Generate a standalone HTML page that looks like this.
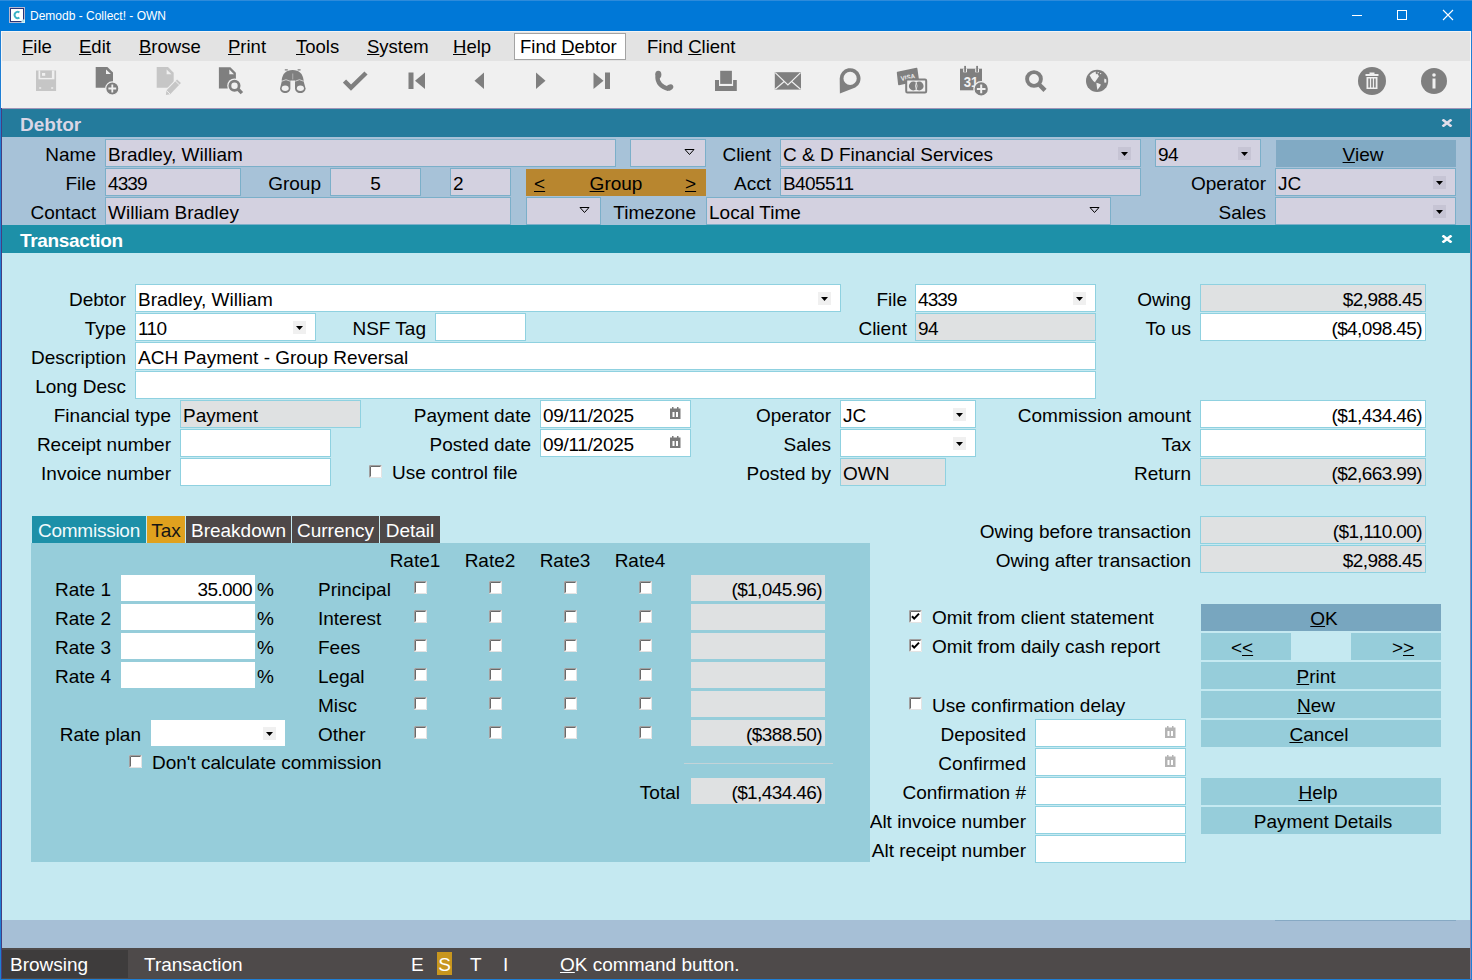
<!DOCTYPE html>
<html><head><meta charset="utf-8"><title>Demodb - Collect! - OWN</title>
<style>
html,body{margin:0;padding:0;width:1472px;height:980px;overflow:hidden;background:#1E7FD5;}
body{position:relative;font-family:"Liberation Sans", sans-serif;font-size:19px;color:#000;}
.a{position:absolute;display:block;}
.t{position:absolute;white-space:nowrap;line-height:20px;}
u{text-decoration:underline;text-underline-offset:1px;text-decoration-thickness:1px;}
</style></head><body>
<div class="a" style="left:0px;top:0px;width:1472px;height:980px;background:#1E7FD5;"></div>
<div class="a" style="left:1px;top:31px;width:1470px;height:948px;background:#463E80;"></div>
<div class="a" style="left:1470px;top:108px;width:1px;height:871px;background:#8E86B0;"></div>
<div class="a" style="left:1px;top:31px;width:1px;height:77px;background:#F6F6F6;"></div>
<div class="a" style="left:1470px;top:31px;width:1px;height:77px;background:#F6F6F6;"></div>
<div class="a" style="left:0px;top:0px;width:1472px;height:31px;background:#0078D7;"></div>
<div class="a" style="left:0px;top:0px;width:1472px;height:1px;background:#2D8BDB;"></div>
<svg class="a" style="left:9px;top:7px" width="16" height="16" viewBox="0 0 16 16"><rect x="0.5" y="0.5" width="15" height="15" fill="none" stroke="#B7B7CF" stroke-width="1"/><rect x="1.5" y="1.5" width="13" height="13" fill="#fff" stroke="#28367A" stroke-width="1"/><path d="M10.4 5.4 A3.1 3.1 0 1 0 10.4 10.6" fill="none" stroke="#3BB3C6" stroke-width="1.9"/><rect x="12.5" y="12.5" width="3.5" height="3.5" fill="#D8F0F4"/><rect x="13.5" y="13.5" width="1.2" height="1.2" fill="#6CC6D4"/></svg>
<div class="t" style="top:6px;font-size:12px;color:#fff;left:30px;">Demodb - Collect! - OWN</div>
<svg class="a" style="left:1340px;top:0" width="130" height="31" viewBox="0 0 130 31"><rect x="12" y="15" width="10" height="1" fill="#fff"/><rect x="57.5" y="10.5" width="9" height="9" fill="none" stroke="#fff" stroke-width="1"/><path d="M103 10 L113 20 M113 10 L103 20" stroke="#fff" stroke-width="1.1"/></svg>
<div class="a" style="left:2px;top:31px;width:1468px;height:30px;background:#E3E3E3;"></div>
<div class="a" style="left:2px;top:31px;width:1468px;height:1px;background:#F4F4F4;"></div>
<div class="t" style="top:37px;font-size:18.5px;left:22px;"><u>F</u>ile</div>
<div class="t" style="top:37px;font-size:18.5px;left:79px;"><u>E</u>dit</div>
<div class="t" style="top:37px;font-size:18.5px;left:139px;"><u>B</u>rowse</div>
<div class="t" style="top:37px;font-size:18.5px;left:228px;"><u>P</u>rint</div>
<div class="t" style="top:37px;font-size:18.5px;left:296px;"><u>T</u>ools</div>
<div class="t" style="top:37px;font-size:18.5px;left:367px;"><u>S</u>ystem</div>
<div class="t" style="top:37px;font-size:18.5px;left:453px;"><u>H</u>elp</div>
<div class="a" style="left:514px;top:33px;width:112px;height:27px;background:#FFFFFF;box-sizing:border-box;border:1px solid #A3A3A3;"></div>
<div class="t" style="top:37px;font-size:18.5px;left:520px;">Find <u>D</u>ebtor</div>
<div class="t" style="top:37px;font-size:18.5px;left:647px;">Find <u>C</u>lient</div>
<div class="a" style="left:2px;top:61px;width:1468px;height:47px;background:#F0F0F0;"></div>
<div class="a" style="left:2px;top:108px;width:1468px;height:1px;background:#9F95B8;"></div>
<svg class="a" style="left:36px;top:70px" width="21" height="22" viewBox="0 0 21 22"><path d="M0 0.5 H20.1 V21 H0 Z" fill="#C6C6C6"/><rect x="2.5" y="0.5" width="15.9" height="8.8" fill="#F0F0F0"/><rect x="4.2" y="0.5" width="11.7" height="7.4" fill="#C6C6C6"/><rect x="6" y="3" width="3.2" height="2.8" fill="#F0F0F0"/><rect x="3.2" y="17.3" width="2" height="1.4" fill="#F0F0F0"/><rect x="15.2" y="17.3" width="2" height="1.4" fill="#F0F0F0"/></svg>
<svg class="a" style="left:95px;top:67px" width="25" height="29" viewBox="0 0 25 29"><path d="M0.7 0.1 H12.4 L18 5.6 V20.8 H0.7 Z" fill="#7F7F7F"/><path d="M11 2.4 V7 H15.9 Z" fill="#F0F0F0"/><circle cx="17.3" cy="21.5" r="6.6" fill="#7F7F7F" stroke="#F0F0F0" stroke-width="1.2"/><path d="M17.3 17.6 V25.4 M13.4 21.5 H21.2" stroke="#F0F0F0" stroke-width="1.8"/></svg>
<svg class="a" style="left:156px;top:67px" width="28" height="29" viewBox="0 0 28 29"><path d="M0.7 0.1 H12 L17.7 5.8 V20.8 H0.7 Z" fill="#C6C6C6"/><path d="M10.6 2.4 V7.2 H15.5 Z" fill="#F0F0F0"/><path d="M9.2 28.6 L9.63 22.84 L20.33 11.69 L25.67 16.81 L14.97 27.96 Z" fill="#F0F0F0"/><path d="M9.9 27.9 L10.35 23.53 L21.05 12.38 L24.95 16.12 L14.25 27.27 Z" fill="#C6C6C6"/><path d="M10.1 23.3 L14.5 27.5 M19.1 13.7 L23.7 18.1" stroke="#F0F0F0" stroke-width="1"/></svg>
<svg class="a" style="left:218px;top:67px" width="26" height="28" viewBox="0 0 26 28"><path d="M0.9 0.3 H12.4 L17.9 5.8 V21.5 H0.9 Z" fill="#7F7F7F"/><path d="M11.3 2.6 V7.3 H16 Z" fill="#F0F0F0"/><circle cx="16.5" cy="18.7" r="7.3" fill="#F0F0F0"/><circle cx="16.5" cy="18.7" r="4.6" fill="none" stroke="#7F7F7F" stroke-width="2.8"/><path d="M19.6 21.8 L23.9 26.1" stroke="#7F7F7F" stroke-width="3.4"/></svg>
<svg class="a" style="left:279px;top:69px" width="28" height="24" viewBox="0 0 28 24"><path d="M2.6 11.5 C3.4 4.5 7 1 13.6 1 C20.2 1 23.8 4.5 24.6 11.5 Z" fill="#7F7F7F"/><path d="M3.2 10.8 H11.4 V19.5 A5.2 4.6 0 0 1 1 19.5 Z" fill="#7F7F7F"/><path d="M16 10.8 H24.2 L26.6 19.5 A5.2 4.6 0 0 1 16 19.5 Z" fill="#7F7F7F"/><ellipse cx="6.2" cy="19.3" rx="3.5" ry="2.7" fill="#F0F0F0"/><ellipse cx="21.4" cy="19.3" rx="3.5" ry="2.7" fill="#F0F0F0"/><path d="M2.8 12.2 Q7 9.2 11.2 12.2 M16.2 12.2 Q20.4 9.2 24.6 12.2" fill="none" stroke="#F0F0F0" stroke-width="0.7"/><rect x="13.1" y="4.5" width="1.2" height="6" fill="#A9A9A9"/><path d="M5.8 0.9 H8.8 M18.6 0.9 H21.6" stroke="#7F7F7F" stroke-width="1.1"/></svg>
<svg class="a" style="left:343px;top:71px" width="25" height="20" viewBox="0 0 25 20"><path d="M1.5 10 L8 16.5 L23 2" fill="none" stroke="#7F7F7F" stroke-width="4.5"/></svg>
<svg class="a" style="left:408px;top:72px" width="18" height="18" viewBox="0 0 18 18"><rect x="0.5" y="0.5" width="5" height="16.5" fill="#7F7F7F"/><path d="M17 0.5 V17 L7 8.75 Z" fill="#7F7F7F"/></svg>
<svg class="a" style="left:474px;top:72px" width="11" height="18" viewBox="0 0 11 18"><path d="M10 0.5 V17 L0.5 8.75 Z" fill="#7F7F7F"/></svg>
<svg class="a" style="left:536px;top:72px" width="11" height="18" viewBox="0 0 11 18"><path d="M0 0.5 V17 L9.5 8.75 Z" fill="#7F7F7F"/></svg>
<svg class="a" style="left:593px;top:72px" width="18" height="18" viewBox="0 0 18 18"><path d="M0.5 0.5 V17 L10.5 8.75 Z" fill="#7F7F7F"/><rect x="12" y="0.5" width="5" height="16.5" fill="#7F7F7F"/></svg>
<svg class="a" style="left:653px;top:70px" width="22" height="22" viewBox="0 0 22 22"><ellipse cx="5.3" cy="4.6" rx="3.1" ry="3.9" fill="#7F7F7F"/><ellipse cx="16.6" cy="17.5" rx="3.9" ry="2.9" transform="rotate(-30 16.6 17.5)" fill="#7F7F7F"/><path d="M4.4 6.5 Q4.2 15.5 15.5 19" fill="none" stroke="#7F7F7F" stroke-width="4.2"/></svg>
<svg class="a" style="left:714px;top:70px" width="24" height="22" viewBox="0 0 24 22"><rect x="6.2" y="0.8" width="11.7" height="13.1" fill="#7F7F7F"/><path d="M1 10 H5 V16 H19.1 V10 H22.8 V21 H1 Z" fill="#7F7F7F"/></svg>
<svg class="a" style="left:774px;top:72px" width="28" height="18" viewBox="0 0 28 18"><rect x="0.8" y="0.2" width="26.2" height="17.4" fill="#7F7F7F"/><path d="M1.2 0.6 L13.9 13 L26.6 0.6 M1.2 17.2 L9.9 9.7 M26.6 17.2 L17.9 9.7" fill="none" stroke="#F0F0F0" stroke-width="1.2"/></svg>
<svg class="a" style="left:838px;top:67px" width="24" height="28" viewBox="0 0 24 28"><path d="M1.7 11.6 A10.4 10.4 0 1 1 17.3 20.6 L1.9 26.4 Z" fill="#7F7F7F"/><circle cx="12.1" cy="11.4" r="6.6" fill="#F0F0F0"/></svg>
<svg class="a" style="left:896px;top:67px" width="33" height="28" viewBox="0 0 33 28"><path d="M1.6 5.6 L20.6 1.6 L22.2 13.2 L2.9 17.4 Z" fill="#7F7F7F" stroke="#7F7F7F" stroke-width="1.6" stroke-linejoin="round"/><text x="4.6" y="12.6" font-family="Liberation Sans" font-weight="bold" font-size="6.6" fill="#EDEDED" textLength="14.5" lengthAdjust="spacingAndGlyphs" transform="rotate(-11 12 10)">VISA</text><rect x="10.2" y="12.6" width="20" height="12.8" rx="1.2" fill="#F0F0F0" stroke="#7F7F7F" stroke-width="2"/><circle cx="17.3" cy="19" r="4.4" fill="#7F7F7F"/><circle cx="23.2" cy="19" r="4.4" fill="#7F7F7F"/><path d="M20.25 15.8 Q18.6 19 20.25 22.2 Q21.9 19 20.25 15.8 Z" fill="none" stroke="#F0F0F0" stroke-width="0.8"/></svg>
<svg class="a" style="left:960px;top:65px" width="29" height="32" viewBox="0 0 29 32"><rect x="0" y="3.7" width="22" height="21.6" fill="#7F7F7F"/><rect x="3.2" y="3.7" width="3.8" height="3.6" fill="#F0F0F0"/><rect x="15.2" y="3.7" width="3.8" height="3.6" fill="#F0F0F0"/><rect x="4.2" y="0.9" width="1.8" height="6" fill="#7F7F7F"/><rect x="16.2" y="0.9" width="1.8" height="6" fill="#7F7F7F"/><text x="3.8" y="22.4" font-family="Liberation Sans" font-weight="bold" font-size="15.5" fill="#F0F0F0" textLength="14.6" lengthAdjust="spacingAndGlyphs">31</text><circle cx="21.2" cy="23.9" r="7.3" fill="#7F7F7F" stroke="#F0F0F0" stroke-width="1.3"/><path d="M21.2 19.6 V28.2 M16.9 23.9 H25.5" stroke="#F0F0F0" stroke-width="2"/></svg>
<svg class="a" style="left:1024px;top:69px" width="24" height="24" viewBox="0 0 24 24"><circle cx="10" cy="10" r="6.9" fill="none" stroke="#7F7F7F" stroke-width="3.9"/><path d="M14.6 15 L21 21.4" stroke="#7F7F7F" stroke-width="4.4"/></svg>
<svg class="a" style="left:1085px;top:69px" width="24" height="24" viewBox="0 0 24 24"><circle cx="12.1" cy="11.9" r="11.1" fill="#7F7F7F"/><path d="M4.6 6.3 Q7 3.6 10.6 2.6 L11 5.5 L12.2 4.6 L14 7.2 L12.3 9.8 L10.4 12.6 L10.2 13.6 Q7.6 11.8 6.4 9.6 Z" fill="#F0F0F0"/><path d="M11.4 13.8 Q14 14.2 15.9 15.6 Q15.2 17.6 14.2 18.6 L12.4 21.1 Q11.6 17 11.4 13.8 Z" fill="#F0F0F0"/><path d="M19.4 9.6 L21.3 10.4 L21.3 13.4 L19.5 13.8 Q19 11.6 19.4 9.6 Z" fill="#F0F0F0"/><circle cx="13.2" cy="3.6" r="0.7" fill="#F0F0F0"/><circle cx="15.6" cy="4.6" r="0.7" fill="#F0F0F0"/></svg>
<svg class="a" style="left:1357px;top:66px" width="30" height="30" viewBox="0 0 30 30"><circle cx="15" cy="15" r="14" fill="#7F7F7F"/><rect x="8.5" y="8" width="13" height="2" fill="#F0F0F0"/><rect x="12.5" y="6.5" width="5" height="2" fill="#F0F0F0"/><path d="M9.5 11 H20.5 V23 H9.5 Z" fill="#F0F0F0"/><rect x="11.3" y="12.5" width="1.6" height="9" fill="#7F7F7F"/><rect x="14.2" y="12.5" width="1.6" height="9" fill="#7F7F7F"/><rect x="17.1" y="12.5" width="1.6" height="9" fill="#7F7F7F"/></svg>
<svg class="a" style="left:1421px;top:68px" width="26" height="26" viewBox="0 0 26 26"><circle cx="13" cy="13" r="13" fill="#7F7F7F"/><circle cx="13" cy="7" r="1.8" fill="#F0F0F0"/><rect x="11.5" y="10.5" width="3" height="10" fill="#F0F0F0"/></svg>
<div class="a" style="left:2px;top:109px;width:1468px;height:28px;background:#247B9C;"></div>
<div class="t" style="top:115px;color:#DAD6E6;font-weight:bold;left:20px;">Debtor</div>
<svg class="a" style="left:1441px;top:119px" width="12" height="8" viewBox="0 0 12 8"><path d="M1.5 0.5 L10.5 7.5 M10.5 0.5 L1.5 7.5" stroke="#E2DEEA" stroke-width="2.6"/></svg>
<div class="a" style="left:2px;top:137px;width:1468px;height:88px;background:#A7C2D8;"></div>
<div class="t" style="top:145px;right:1376px;text-align:right;">Name</div>
<div class="a" style="left:105px;top:139px;width:511px;height:28px;background:#D3D1E0;box-sizing:border-box;border:1px solid #7BAFC9;"></div>
<div class="t" style="top:145px;left:108px;">Bradley, William</div>
<div class="a" style="left:630px;top:139px;width:76px;height:28px;background:#D3D1E0;box-sizing:border-box;border:1px solid #7BAFC9;"></div>
<svg class="a" style="left:684px;top:148px" width="11" height="9" viewBox="0 0 11 9"><path d="M1 1.5 H10 L5.5 6.5 Z" fill="none" stroke="#000" stroke-width="1"/></svg>
<div class="t" style="top:145px;right:701px;text-align:right;">Client</div>
<div class="a" style="left:780px;top:139px;width:361px;height:28px;background:#D3D1E0;box-sizing:border-box;border:1px solid #7BAFC9;"></div>
<div class="t" style="top:145px;left:783px;">C &amp; D Financial Services</div>
<div class="a" style="left:1118px;top:147px;width:13px;height:13px;background:#C6C4D4;"></div>
<svg class="a" style="left:1118px;top:147px" width="13" height="13" viewBox="0 0 13 13"><path d="M3 5 H10 L6.5 9 Z" fill="#000"/></svg>
<div class="a" style="left:1155px;top:139px;width:106px;height:28px;background:#D3D1E0;box-sizing:border-box;border:1px solid #7BAFC9;"></div>
<div class="t" style="top:145px;letter-spacing:-0.6px;left:1158px;">94</div>
<div class="a" style="left:1238px;top:147px;width:13px;height:13px;background:#C6C4D4;"></div>
<svg class="a" style="left:1238px;top:147px" width="13" height="13" viewBox="0 0 13 13"><path d="M3 5 H10 L6.5 9 Z" fill="#000"/></svg>
<div class="a" style="left:1276px;top:140px;width:180px;height:27px;background:#81AAC4;"></div>
<div class="t" style="top:145px;left:1273px;width:180px;text-align:center;"><u>V</u>iew</div>
<div class="t" style="top:174px;right:1376px;text-align:right;">File</div>
<div class="a" style="left:105px;top:168px;width:136px;height:28px;background:#D3D1E0;box-sizing:border-box;border:1px solid #7BAFC9;"></div>
<div class="t" style="top:174px;letter-spacing:-0.9px;left:108px;">4339</div>
<div class="t" style="top:174px;right:1151px;text-align:right;">Group</div>
<div class="a" style="left:330px;top:168px;width:91px;height:28px;background:#D3D1E0;box-sizing:border-box;border:1px solid #7BAFC9;"></div>
<div class="t" style="top:174px;left:330px;width:91px;text-align:center;">5</div>
<div class="a" style="left:450px;top:168px;width:61px;height:28px;background:#D3D1E0;box-sizing:border-box;border:1px solid #7BAFC9;"></div>
<div class="t" style="top:174px;left:453px;">2</div>
<div class="a" style="left:526px;top:169px;width:180px;height:27px;background:#B8862F;"></div>
<div class="t" style="top:174px;left:534px;"><u>&lt;</u></div>
<div class="t" style="top:174px;left:526px;width:180px;text-align:center;"><u>G</u>roup</div>
<div class="t" style="top:174px;left:685px;"><u>&gt;</u></div>
<div class="t" style="top:174px;right:701px;text-align:right;">Acct</div>
<div class="a" style="left:780px;top:168px;width:361px;height:28px;background:#D3D1E0;box-sizing:border-box;border:1px solid #7BAFC9;"></div>
<div class="t" style="top:174px;letter-spacing:-0.6px;left:783px;">B405511</div>
<div class="t" style="top:174px;right:206px;text-align:right;">Operator</div>
<div class="a" style="left:1275px;top:168px;width:181px;height:28px;background:#D3D1E0;box-sizing:border-box;border:1px solid #7BAFC9;"></div>
<div class="t" style="top:174px;left:1278px;">JC</div>
<div class="a" style="left:1433px;top:176px;width:13px;height:13px;background:#C6C4D4;"></div>
<svg class="a" style="left:1433px;top:176px" width="13" height="13" viewBox="0 0 13 13"><path d="M3 5 H10 L6.5 9 Z" fill="#000"/></svg>
<div class="t" style="top:203px;right:1376px;text-align:right;">Contact</div>
<div class="a" style="left:105px;top:197px;width:406px;height:28px;background:#D3D1E0;box-sizing:border-box;border:1px solid #7BAFC9;"></div>
<div class="t" style="top:203px;left:108px;">William Bradley</div>
<div class="a" style="left:526px;top:197px;width:75px;height:28px;background:#D3D1E0;box-sizing:border-box;border:1px solid #7BAFC9;"></div>
<svg class="a" style="left:579px;top:206px" width="11" height="9" viewBox="0 0 11 9"><path d="M1 1.5 H10 L5.5 6.5 Z" fill="none" stroke="#000" stroke-width="1"/></svg>
<div class="t" style="top:203px;right:776px;text-align:right;">Timezone</div>
<div class="a" style="left:706px;top:197px;width:405px;height:28px;background:#D3D1E0;box-sizing:border-box;border:1px solid #7BAFC9;"></div>
<div class="t" style="top:203px;left:709px;">Local Time</div>
<svg class="a" style="left:1089px;top:206px" width="11" height="9" viewBox="0 0 11 9"><path d="M1 1.5 H10 L5.5 6.5 Z" fill="none" stroke="#000" stroke-width="1"/></svg>
<div class="t" style="top:203px;right:206px;text-align:right;">Sales</div>
<div class="a" style="left:1275px;top:197px;width:181px;height:28px;background:#D3D1E0;box-sizing:border-box;border:1px solid #7BAFC9;"></div>
<div class="a" style="left:1433px;top:205px;width:13px;height:13px;background:#C6C4D4;"></div>
<svg class="a" style="left:1433px;top:205px" width="13" height="13" viewBox="0 0 13 13"><path d="M3 5 H10 L6.5 9 Z" fill="#000"/></svg>
<div class="a" style="left:2px;top:225px;width:1468px;height:28px;background:#1D90A8;"></div>
<div class="t" style="top:231px;color:#FFFFFF;font-weight:bold;letter-spacing:-0.35px;left:20px;">Transaction</div>
<svg class="a" style="left:1441px;top:235px" width="12" height="8" viewBox="0 0 12 8"><path d="M1.5 0.5 L10.5 7.5 M10.5 0.5 L1.5 7.5" stroke="#FFFFFF" stroke-width="2.6"/></svg>
<div class="a" style="left:2px;top:253px;width:1468px;height:667px;background:#C5E9F1;"></div>
<div class="t" style="top:290px;right:1346px;text-align:right;">Debtor</div>
<div class="a" style="left:135px;top:284px;width:706px;height:28px;background:#FFFFFF;box-sizing:border-box;border:1px solid #8FD1E0;"></div>
<div class="t" style="top:290px;left:138px;">Bradley, William</div>
<div class="a" style="left:818px;top:292px;width:13px;height:13px;background:#F0F0F0;"></div>
<svg class="a" style="left:818px;top:292px" width="13" height="13" viewBox="0 0 13 13"><path d="M3 5 H10 L6.5 9 Z" fill="#000"/></svg>
<div class="t" style="top:290px;right:565px;text-align:right;">File</div>
<div class="a" style="left:915px;top:284px;width:181px;height:28px;background:#FFFFFF;box-sizing:border-box;border:1px solid #8FD1E0;"></div>
<div class="t" style="top:290px;letter-spacing:-0.9px;left:918px;">4339</div>
<div class="a" style="left:1073px;top:292px;width:13px;height:13px;background:#F0F0F0;"></div>
<svg class="a" style="left:1073px;top:292px" width="13" height="13" viewBox="0 0 13 13"><path d="M3 5 H10 L6.5 9 Z" fill="#000"/></svg>
<div class="t" style="top:290px;right:281px;text-align:right;">Owing</div>
<div class="a" style="left:1200px;top:284px;width:226px;height:28px;background:#DFE1E2;box-sizing:border-box;border:1px solid #8FD1E0;"></div>
<div class="t" style="top:290px;letter-spacing:-0.6px;right:50px;text-align:right;">$2,988.45</div>
<div class="t" style="top:319px;right:1346px;text-align:right;">Type</div>
<div class="a" style="left:135px;top:313px;width:181px;height:28px;background:#FFFFFF;box-sizing:border-box;border:1px solid #8FD1E0;"></div>
<div class="t" style="top:319px;letter-spacing:-0.6px;left:138px;">110</div>
<div class="a" style="left:293px;top:321px;width:13px;height:13px;background:#F0F0F0;"></div>
<svg class="a" style="left:293px;top:321px" width="13" height="13" viewBox="0 0 13 13"><path d="M3 5 H10 L6.5 9 Z" fill="#000"/></svg>
<div class="t" style="top:319px;right:1046px;text-align:right;">NSF Tag</div>
<div class="a" style="left:435px;top:313px;width:91px;height:28px;background:#FFFFFF;box-sizing:border-box;border:1px solid #8FD1E0;"></div>
<div class="t" style="top:319px;right:565px;text-align:right;">Client</div>
<div class="a" style="left:915px;top:313px;width:181px;height:28px;background:#DFE1E2;box-sizing:border-box;border:1px solid #8FD1E0;"></div>
<div class="t" style="top:319px;letter-spacing:-0.6px;left:918px;">94</div>
<div class="t" style="top:319px;right:281px;text-align:right;">To us</div>
<div class="a" style="left:1200px;top:313px;width:226px;height:28px;background:#FFFFFF;box-sizing:border-box;border:1px solid #8FD1E0;"></div>
<div class="t" style="top:319px;letter-spacing:-0.6px;right:50px;text-align:right;">($4,098.45)</div>
<div class="t" style="top:348px;right:1346px;text-align:right;">Description</div>
<div class="a" style="left:135px;top:342px;width:961px;height:28px;background:#FFFFFF;box-sizing:border-box;border:1px solid #8FD1E0;"></div>
<div class="t" style="top:348px;left:138px;">ACH Payment - Group Reversal</div>
<div class="t" style="top:377px;right:1346px;text-align:right;">Long Desc</div>
<div class="a" style="left:135px;top:371px;width:961px;height:28px;background:#FFFFFF;box-sizing:border-box;border:1px solid #8FD1E0;"></div>
<div class="t" style="top:406px;right:1301px;text-align:right;">Financial type</div>
<div class="a" style="left:180px;top:400px;width:181px;height:28px;background:#DFE1E2;box-sizing:border-box;border:1px solid #8FD1E0;"></div>
<div class="t" style="top:406px;left:183px;">Payment</div>
<div class="t" style="top:406px;right:941px;text-align:right;">Payment date</div>
<div class="a" style="left:540px;top:400px;width:151px;height:28px;background:#FFFFFF;box-sizing:border-box;border:1px solid #8FD1E0;"></div>
<div class="t" style="top:406px;letter-spacing:-0.3px;left:543px;">09/11/2025</div>
<svg class="a" style="left:670px;top:407px" width="11" height="12" viewBox="0 0 11 12"><rect x="0" y="1.5" width="10.5" height="10.5" fill="#7A7A7A"/><rect x="2" y="0" width="1.5" height="3" fill="#7A7A7A"/><rect x="7" y="0" width="1.5" height="3" fill="#7A7A7A"/><rect x="2.5" y="5" width="2" height="5" fill="#fff"/><rect x="6" y="5" width="2" height="5" fill="#fff"/></svg>
<div class="t" style="top:406px;right:641px;text-align:right;">Operator</div>
<div class="a" style="left:840px;top:400px;width:136px;height:28px;background:#FFFFFF;box-sizing:border-box;border:1px solid #8FD1E0;"></div>
<div class="t" style="top:406px;left:843px;">JC</div>
<div class="a" style="left:953px;top:408px;width:13px;height:13px;background:#F0F0F0;"></div>
<svg class="a" style="left:953px;top:408px" width="13" height="13" viewBox="0 0 13 13"><path d="M3 5 H10 L6.5 9 Z" fill="#000"/></svg>
<div class="t" style="top:406px;right:281px;text-align:right;">Commission amount</div>
<div class="a" style="left:1200px;top:400px;width:226px;height:28px;background:#FFFFFF;box-sizing:border-box;border:1px solid #8FD1E0;"></div>
<div class="t" style="top:406px;letter-spacing:-0.6px;right:50px;text-align:right;">($1,434.46)</div>
<div class="t" style="top:435px;right:1301px;text-align:right;">Receipt number</div>
<div class="a" style="left:180px;top:429px;width:151px;height:28px;background:#FFFFFF;box-sizing:border-box;border:1px solid #8FD1E0;"></div>
<div class="t" style="top:435px;right:941px;text-align:right;">Posted date</div>
<div class="a" style="left:540px;top:429px;width:151px;height:28px;background:#FFFFFF;box-sizing:border-box;border:1px solid #8FD1E0;"></div>
<div class="t" style="top:435px;letter-spacing:-0.3px;left:543px;">09/11/2025</div>
<svg class="a" style="left:670px;top:436px" width="11" height="12" viewBox="0 0 11 12"><rect x="0" y="1.5" width="10.5" height="10.5" fill="#7A7A7A"/><rect x="2" y="0" width="1.5" height="3" fill="#7A7A7A"/><rect x="7" y="0" width="1.5" height="3" fill="#7A7A7A"/><rect x="2.5" y="5" width="2" height="5" fill="#fff"/><rect x="6" y="5" width="2" height="5" fill="#fff"/></svg>
<div class="t" style="top:435px;right:641px;text-align:right;">Sales</div>
<div class="a" style="left:840px;top:429px;width:136px;height:28px;background:#FFFFFF;box-sizing:border-box;border:1px solid #8FD1E0;"></div>
<div class="a" style="left:953px;top:437px;width:13px;height:13px;background:#F0F0F0;"></div>
<svg class="a" style="left:953px;top:437px" width="13" height="13" viewBox="0 0 13 13"><path d="M3 5 H10 L6.5 9 Z" fill="#000"/></svg>
<div class="t" style="top:435px;right:281px;text-align:right;">Tax</div>
<div class="a" style="left:1200px;top:429px;width:226px;height:28px;background:#FFFFFF;box-sizing:border-box;border:1px solid #8FD1E0;"></div>
<div class="t" style="top:464px;right:1301px;text-align:right;">Invoice number</div>
<div class="a" style="left:180px;top:458px;width:151px;height:28px;background:#FFFFFF;box-sizing:border-box;border:1px solid #8FD1E0;"></div>
<svg class="a" style="left:369px;top:465px" width="13" height="13" viewBox="0 0 13 13"><rect x="0" y="0" width="13" height="13" fill="#FFFFFF"/><path d="M0.5 12.5 V0.5 H12.5" fill="none" stroke="#A0A0A0" stroke-width="1"/><path d="M1.5 11.5 V1.5 H11.5" fill="none" stroke="#696969" stroke-width="1"/><path d="M1 12.5 H12.5 V1" fill="none" stroke="#E3E3E3" stroke-width="1"/></svg>
<div class="t" style="top:463px;left:392px;">Use control file</div>
<div class="t" style="top:464px;right:641px;text-align:right;">Posted by</div>
<div class="a" style="left:840px;top:458px;width:106px;height:28px;background:#DFE1E2;box-sizing:border-box;border:1px solid #8FD1E0;"></div>
<div class="t" style="top:464px;left:843px;">OWN</div>
<div class="t" style="top:464px;right:281px;text-align:right;">Return</div>
<div class="a" style="left:1200px;top:458px;width:226px;height:28px;background:#DFE1E2;box-sizing:border-box;border:1px solid #8FD1E0;"></div>
<div class="t" style="top:464px;letter-spacing:-0.6px;right:50px;text-align:right;">($2,663.99)</div>
<div class="t" style="top:522px;right:281px;text-align:right;">Owing before transaction</div>
<div class="a" style="left:1200px;top:516px;width:226px;height:28px;background:#DFE1E2;box-sizing:border-box;border:1px solid #8FD1E0;"></div>
<div class="t" style="top:522px;letter-spacing:-0.6px;right:50px;text-align:right;">($1,110.00)</div>
<div class="t" style="top:551px;right:281px;text-align:right;">Owing after transaction</div>
<div class="a" style="left:1200px;top:545px;width:226px;height:28px;background:#DFE1E2;box-sizing:border-box;border:1px solid #8FD1E0;"></div>
<div class="t" style="top:551px;letter-spacing:-0.6px;right:50px;text-align:right;">$2,988.45</div>
<svg class="a" style="left:909px;top:610px" width="13" height="13" viewBox="0 0 13 13"><rect x="0" y="0" width="13" height="13" fill="#FFFFFF"/><path d="M0.5 12.5 V0.5 H12.5" fill="none" stroke="#A0A0A0" stroke-width="1"/><path d="M1.5 11.5 V1.5 H11.5" fill="none" stroke="#696969" stroke-width="1"/><path d="M1 12.5 H12.5 V1" fill="none" stroke="#E3E3E3" stroke-width="1"/><path d="M3 6.2 L5.2 8.6 L10 3.6" fill="none" stroke="#000" stroke-width="2"/></svg>
<div class="t" style="top:608px;left:932px;">Omit from client statement</div>
<svg class="a" style="left:909px;top:639px" width="13" height="13" viewBox="0 0 13 13"><rect x="0" y="0" width="13" height="13" fill="#FFFFFF"/><path d="M0.5 12.5 V0.5 H12.5" fill="none" stroke="#A0A0A0" stroke-width="1"/><path d="M1.5 11.5 V1.5 H11.5" fill="none" stroke="#696969" stroke-width="1"/><path d="M1 12.5 H12.5 V1" fill="none" stroke="#E3E3E3" stroke-width="1"/><path d="M3 6.2 L5.2 8.6 L10 3.6" fill="none" stroke="#000" stroke-width="2"/></svg>
<div class="t" style="top:637px;left:932px;">Omit from daily cash report</div>
<svg class="a" style="left:909px;top:697px" width="13" height="13" viewBox="0 0 13 13"><rect x="0" y="0" width="13" height="13" fill="#FFFFFF"/><path d="M0.5 12.5 V0.5 H12.5" fill="none" stroke="#A0A0A0" stroke-width="1"/><path d="M1.5 11.5 V1.5 H11.5" fill="none" stroke="#696969" stroke-width="1"/><path d="M1 12.5 H12.5 V1" fill="none" stroke="#E3E3E3" stroke-width="1"/></svg>
<div class="t" style="top:696px;left:932px;">Use confirmation delay</div>
<div class="t" style="top:725px;right:446px;text-align:right;">Deposited</div>
<div class="a" style="left:1035px;top:719px;width:151px;height:28px;background:#FFFFFF;box-sizing:border-box;border:1px solid #8FD1E0;"></div>
<svg class="a" style="left:1165px;top:726px" width="11" height="12" viewBox="0 0 11 12"><rect x="0" y="1.5" width="10.5" height="10.5" fill="#B4B4B4"/><rect x="2" y="0" width="1.5" height="3" fill="#B4B4B4"/><rect x="7" y="0" width="1.5" height="3" fill="#B4B4B4"/><rect x="2.5" y="5" width="2" height="5" fill="#fff"/><rect x="6" y="5" width="2" height="5" fill="#fff"/></svg>
<div class="t" style="top:754px;right:446px;text-align:right;">Confirmed</div>
<div class="a" style="left:1035px;top:748px;width:151px;height:28px;background:#FFFFFF;box-sizing:border-box;border:1px solid #8FD1E0;"></div>
<svg class="a" style="left:1165px;top:755px" width="11" height="12" viewBox="0 0 11 12"><rect x="0" y="1.5" width="10.5" height="10.5" fill="#B4B4B4"/><rect x="2" y="0" width="1.5" height="3" fill="#B4B4B4"/><rect x="7" y="0" width="1.5" height="3" fill="#B4B4B4"/><rect x="2.5" y="5" width="2" height="5" fill="#fff"/><rect x="6" y="5" width="2" height="5" fill="#fff"/></svg>
<div class="t" style="top:783px;right:446px;text-align:right;">Confirmation #</div>
<div class="a" style="left:1035px;top:777px;width:151px;height:28px;background:#FFFFFF;box-sizing:border-box;border:1px solid #8FD1E0;"></div>
<div class="t" style="top:812px;right:446px;text-align:right;">Alt invoice number</div>
<div class="a" style="left:1035px;top:806px;width:151px;height:28px;background:#FFFFFF;box-sizing:border-box;border:1px solid #8FD1E0;"></div>
<div class="t" style="top:841px;right:446px;text-align:right;">Alt receipt number</div>
<div class="a" style="left:1035px;top:835px;width:151px;height:28px;background:#FFFFFF;box-sizing:border-box;border:1px solid #8FD1E0;"></div>
<div class="a" style="left:1201px;top:604px;width:240px;height:27px;background:#78A6BF;"></div>
<div class="t" style="top:609px;left:1204px;width:240px;text-align:center;"><u>O</u>K</div>
<div class="a" style="left:1201px;top:633px;width:90px;height:27px;background:#96CDDA;"></div>
<div class="t" style="top:638px;left:1197px;width:90px;text-align:center;">&lt;<u>&lt;</u></div>
<div class="a" style="left:1351px;top:633px;width:90px;height:27px;background:#96CDDA;"></div>
<div class="t" style="top:638px;left:1358px;width:90px;text-align:center;">&gt;<u>&gt;</u></div>
<div class="a" style="left:1201px;top:662px;width:240px;height:27px;background:#96CDDA;"></div>
<div class="t" style="top:667px;left:1196px;width:240px;text-align:center;"><u>P</u>rint</div>
<div class="a" style="left:1201px;top:691px;width:240px;height:27px;background:#96CDDA;"></div>
<div class="t" style="top:696px;left:1196px;width:240px;text-align:center;"><u>N</u>ew</div>
<div class="a" style="left:1201px;top:720px;width:240px;height:27px;background:#96CDDA;"></div>
<div class="t" style="top:725px;left:1199px;width:240px;text-align:center;"><u>C</u>ancel</div>
<div class="a" style="left:1201px;top:778px;width:240px;height:27px;background:#96CDDA;"></div>
<div class="t" style="top:783px;left:1198px;width:240px;text-align:center;"><u>H</u>elp</div>
<div class="a" style="left:1201px;top:807px;width:240px;height:27px;background:#96CDDA;"></div>
<div class="t" style="top:812px;left:1203px;width:240px;text-align:center;">Payment Details</div>
<div class="a" style="left:32px;top:516px;width:114px;height:27px;background:#1D90A8;"></div>
<div class="t" style="top:521px;color:#F2FAFC;letter-spacing:-0.25px;left:32px;width:114px;text-align:center;">Commission</div>
<div class="a" style="left:147px;top:516px;width:38px;height:27px;background:#E0A11E;"></div>
<div class="t" style="top:521px;color:#151515;left:147px;width:38px;text-align:center;">Tax</div>
<div class="a" style="left:186px;top:516px;width:105px;height:27px;background:#4E4848;"></div>
<div class="t" style="top:521px;color:#FFFFFF;left:186px;width:105px;text-align:center;">Breakdown</div>
<div class="a" style="left:292px;top:516px;width:87px;height:27px;background:#4E4848;"></div>
<div class="t" style="top:521px;color:#FFFFFF;left:292px;width:87px;text-align:center;">Currency</div>
<div class="a" style="left:380px;top:516px;width:60px;height:27px;background:#4E4848;"></div>
<div class="t" style="top:521px;color:#FFFFFF;left:380px;width:60px;text-align:center;">Detail</div>
<div class="a" style="left:31px;top:543px;width:839px;height:319px;background:#96CDDA;"></div>
<div class="t" style="top:551px;left:375px;width:80px;text-align:center;">Rate1</div>
<div class="t" style="top:551px;left:450px;width:80px;text-align:center;">Rate2</div>
<div class="t" style="top:551px;left:525px;width:80px;text-align:center;">Rate3</div>
<div class="t" style="top:551px;left:600px;width:80px;text-align:center;">Rate4</div>
<div class="t" style="top:580px;right:1361px;text-align:right;">Rate 1</div>
<div class="a" style="left:121px;top:575px;width:134px;height:26px;background:#FFFFFF;"></div>
<div class="t" style="top:580px;letter-spacing:-0.6px;right:1220px;text-align:right;">35.000</div>
<div class="t" style="top:580px;left:257px;">%</div>
<div class="t" style="top:580px;left:318px;">Principal</div>
<svg class="a" style="left:414px;top:581px" width="13" height="13" viewBox="0 0 13 13"><rect x="0" y="0" width="13" height="13" fill="#FFFFFF"/><path d="M0.5 12.5 V0.5 H12.5" fill="none" stroke="#A0A0A0" stroke-width="1"/><path d="M1.5 11.5 V1.5 H11.5" fill="none" stroke="#696969" stroke-width="1"/><path d="M1 12.5 H12.5 V1" fill="none" stroke="#E3E3E3" stroke-width="1"/></svg>
<svg class="a" style="left:489px;top:581px" width="13" height="13" viewBox="0 0 13 13"><rect x="0" y="0" width="13" height="13" fill="#FFFFFF"/><path d="M0.5 12.5 V0.5 H12.5" fill="none" stroke="#A0A0A0" stroke-width="1"/><path d="M1.5 11.5 V1.5 H11.5" fill="none" stroke="#696969" stroke-width="1"/><path d="M1 12.5 H12.5 V1" fill="none" stroke="#E3E3E3" stroke-width="1"/></svg>
<svg class="a" style="left:564px;top:581px" width="13" height="13" viewBox="0 0 13 13"><rect x="0" y="0" width="13" height="13" fill="#FFFFFF"/><path d="M0.5 12.5 V0.5 H12.5" fill="none" stroke="#A0A0A0" stroke-width="1"/><path d="M1.5 11.5 V1.5 H11.5" fill="none" stroke="#696969" stroke-width="1"/><path d="M1 12.5 H12.5 V1" fill="none" stroke="#E3E3E3" stroke-width="1"/></svg>
<svg class="a" style="left:639px;top:581px" width="13" height="13" viewBox="0 0 13 13"><rect x="0" y="0" width="13" height="13" fill="#FFFFFF"/><path d="M0.5 12.5 V0.5 H12.5" fill="none" stroke="#A0A0A0" stroke-width="1"/><path d="M1.5 11.5 V1.5 H11.5" fill="none" stroke="#696969" stroke-width="1"/><path d="M1 12.5 H12.5 V1" fill="none" stroke="#E3E3E3" stroke-width="1"/></svg>
<div class="a" style="left:691px;top:575px;width:134px;height:26px;background:#DFE1E2;"></div>
<div class="t" style="top:580px;letter-spacing:-0.6px;right:650px;text-align:right;">($1,045.96)</div>
<div class="t" style="top:609px;right:1361px;text-align:right;">Rate 2</div>
<div class="a" style="left:121px;top:604px;width:134px;height:26px;background:#FFFFFF;"></div>
<div class="t" style="top:609px;left:257px;">%</div>
<div class="t" style="top:609px;left:318px;">Interest</div>
<svg class="a" style="left:414px;top:610px" width="13" height="13" viewBox="0 0 13 13"><rect x="0" y="0" width="13" height="13" fill="#FFFFFF"/><path d="M0.5 12.5 V0.5 H12.5" fill="none" stroke="#A0A0A0" stroke-width="1"/><path d="M1.5 11.5 V1.5 H11.5" fill="none" stroke="#696969" stroke-width="1"/><path d="M1 12.5 H12.5 V1" fill="none" stroke="#E3E3E3" stroke-width="1"/></svg>
<svg class="a" style="left:489px;top:610px" width="13" height="13" viewBox="0 0 13 13"><rect x="0" y="0" width="13" height="13" fill="#FFFFFF"/><path d="M0.5 12.5 V0.5 H12.5" fill="none" stroke="#A0A0A0" stroke-width="1"/><path d="M1.5 11.5 V1.5 H11.5" fill="none" stroke="#696969" stroke-width="1"/><path d="M1 12.5 H12.5 V1" fill="none" stroke="#E3E3E3" stroke-width="1"/></svg>
<svg class="a" style="left:564px;top:610px" width="13" height="13" viewBox="0 0 13 13"><rect x="0" y="0" width="13" height="13" fill="#FFFFFF"/><path d="M0.5 12.5 V0.5 H12.5" fill="none" stroke="#A0A0A0" stroke-width="1"/><path d="M1.5 11.5 V1.5 H11.5" fill="none" stroke="#696969" stroke-width="1"/><path d="M1 12.5 H12.5 V1" fill="none" stroke="#E3E3E3" stroke-width="1"/></svg>
<svg class="a" style="left:639px;top:610px" width="13" height="13" viewBox="0 0 13 13"><rect x="0" y="0" width="13" height="13" fill="#FFFFFF"/><path d="M0.5 12.5 V0.5 H12.5" fill="none" stroke="#A0A0A0" stroke-width="1"/><path d="M1.5 11.5 V1.5 H11.5" fill="none" stroke="#696969" stroke-width="1"/><path d="M1 12.5 H12.5 V1" fill="none" stroke="#E3E3E3" stroke-width="1"/></svg>
<div class="a" style="left:691px;top:604px;width:134px;height:26px;background:#DFE1E2;"></div>
<div class="t" style="top:638px;right:1361px;text-align:right;">Rate 3</div>
<div class="a" style="left:121px;top:633px;width:134px;height:26px;background:#FFFFFF;"></div>
<div class="t" style="top:638px;left:257px;">%</div>
<div class="t" style="top:638px;left:318px;">Fees</div>
<svg class="a" style="left:414px;top:639px" width="13" height="13" viewBox="0 0 13 13"><rect x="0" y="0" width="13" height="13" fill="#FFFFFF"/><path d="M0.5 12.5 V0.5 H12.5" fill="none" stroke="#A0A0A0" stroke-width="1"/><path d="M1.5 11.5 V1.5 H11.5" fill="none" stroke="#696969" stroke-width="1"/><path d="M1 12.5 H12.5 V1" fill="none" stroke="#E3E3E3" stroke-width="1"/></svg>
<svg class="a" style="left:489px;top:639px" width="13" height="13" viewBox="0 0 13 13"><rect x="0" y="0" width="13" height="13" fill="#FFFFFF"/><path d="M0.5 12.5 V0.5 H12.5" fill="none" stroke="#A0A0A0" stroke-width="1"/><path d="M1.5 11.5 V1.5 H11.5" fill="none" stroke="#696969" stroke-width="1"/><path d="M1 12.5 H12.5 V1" fill="none" stroke="#E3E3E3" stroke-width="1"/></svg>
<svg class="a" style="left:564px;top:639px" width="13" height="13" viewBox="0 0 13 13"><rect x="0" y="0" width="13" height="13" fill="#FFFFFF"/><path d="M0.5 12.5 V0.5 H12.5" fill="none" stroke="#A0A0A0" stroke-width="1"/><path d="M1.5 11.5 V1.5 H11.5" fill="none" stroke="#696969" stroke-width="1"/><path d="M1 12.5 H12.5 V1" fill="none" stroke="#E3E3E3" stroke-width="1"/></svg>
<svg class="a" style="left:639px;top:639px" width="13" height="13" viewBox="0 0 13 13"><rect x="0" y="0" width="13" height="13" fill="#FFFFFF"/><path d="M0.5 12.5 V0.5 H12.5" fill="none" stroke="#A0A0A0" stroke-width="1"/><path d="M1.5 11.5 V1.5 H11.5" fill="none" stroke="#696969" stroke-width="1"/><path d="M1 12.5 H12.5 V1" fill="none" stroke="#E3E3E3" stroke-width="1"/></svg>
<div class="a" style="left:691px;top:633px;width:134px;height:26px;background:#DFE1E2;"></div>
<div class="t" style="top:667px;right:1361px;text-align:right;">Rate 4</div>
<div class="a" style="left:121px;top:662px;width:134px;height:26px;background:#FFFFFF;"></div>
<div class="t" style="top:667px;left:257px;">%</div>
<div class="t" style="top:667px;left:318px;">Legal</div>
<svg class="a" style="left:414px;top:668px" width="13" height="13" viewBox="0 0 13 13"><rect x="0" y="0" width="13" height="13" fill="#FFFFFF"/><path d="M0.5 12.5 V0.5 H12.5" fill="none" stroke="#A0A0A0" stroke-width="1"/><path d="M1.5 11.5 V1.5 H11.5" fill="none" stroke="#696969" stroke-width="1"/><path d="M1 12.5 H12.5 V1" fill="none" stroke="#E3E3E3" stroke-width="1"/></svg>
<svg class="a" style="left:489px;top:668px" width="13" height="13" viewBox="0 0 13 13"><rect x="0" y="0" width="13" height="13" fill="#FFFFFF"/><path d="M0.5 12.5 V0.5 H12.5" fill="none" stroke="#A0A0A0" stroke-width="1"/><path d="M1.5 11.5 V1.5 H11.5" fill="none" stroke="#696969" stroke-width="1"/><path d="M1 12.5 H12.5 V1" fill="none" stroke="#E3E3E3" stroke-width="1"/></svg>
<svg class="a" style="left:564px;top:668px" width="13" height="13" viewBox="0 0 13 13"><rect x="0" y="0" width="13" height="13" fill="#FFFFFF"/><path d="M0.5 12.5 V0.5 H12.5" fill="none" stroke="#A0A0A0" stroke-width="1"/><path d="M1.5 11.5 V1.5 H11.5" fill="none" stroke="#696969" stroke-width="1"/><path d="M1 12.5 H12.5 V1" fill="none" stroke="#E3E3E3" stroke-width="1"/></svg>
<svg class="a" style="left:639px;top:668px" width="13" height="13" viewBox="0 0 13 13"><rect x="0" y="0" width="13" height="13" fill="#FFFFFF"/><path d="M0.5 12.5 V0.5 H12.5" fill="none" stroke="#A0A0A0" stroke-width="1"/><path d="M1.5 11.5 V1.5 H11.5" fill="none" stroke="#696969" stroke-width="1"/><path d="M1 12.5 H12.5 V1" fill="none" stroke="#E3E3E3" stroke-width="1"/></svg>
<div class="a" style="left:691px;top:662px;width:134px;height:26px;background:#DFE1E2;"></div>
<div class="t" style="top:696px;left:318px;">Misc</div>
<svg class="a" style="left:414px;top:697px" width="13" height="13" viewBox="0 0 13 13"><rect x="0" y="0" width="13" height="13" fill="#FFFFFF"/><path d="M0.5 12.5 V0.5 H12.5" fill="none" stroke="#A0A0A0" stroke-width="1"/><path d="M1.5 11.5 V1.5 H11.5" fill="none" stroke="#696969" stroke-width="1"/><path d="M1 12.5 H12.5 V1" fill="none" stroke="#E3E3E3" stroke-width="1"/></svg>
<svg class="a" style="left:489px;top:697px" width="13" height="13" viewBox="0 0 13 13"><rect x="0" y="0" width="13" height="13" fill="#FFFFFF"/><path d="M0.5 12.5 V0.5 H12.5" fill="none" stroke="#A0A0A0" stroke-width="1"/><path d="M1.5 11.5 V1.5 H11.5" fill="none" stroke="#696969" stroke-width="1"/><path d="M1 12.5 H12.5 V1" fill="none" stroke="#E3E3E3" stroke-width="1"/></svg>
<svg class="a" style="left:564px;top:697px" width="13" height="13" viewBox="0 0 13 13"><rect x="0" y="0" width="13" height="13" fill="#FFFFFF"/><path d="M0.5 12.5 V0.5 H12.5" fill="none" stroke="#A0A0A0" stroke-width="1"/><path d="M1.5 11.5 V1.5 H11.5" fill="none" stroke="#696969" stroke-width="1"/><path d="M1 12.5 H12.5 V1" fill="none" stroke="#E3E3E3" stroke-width="1"/></svg>
<svg class="a" style="left:639px;top:697px" width="13" height="13" viewBox="0 0 13 13"><rect x="0" y="0" width="13" height="13" fill="#FFFFFF"/><path d="M0.5 12.5 V0.5 H12.5" fill="none" stroke="#A0A0A0" stroke-width="1"/><path d="M1.5 11.5 V1.5 H11.5" fill="none" stroke="#696969" stroke-width="1"/><path d="M1 12.5 H12.5 V1" fill="none" stroke="#E3E3E3" stroke-width="1"/></svg>
<div class="a" style="left:691px;top:691px;width:134px;height:26px;background:#DFE1E2;"></div>
<div class="t" style="top:725px;left:318px;">Other</div>
<svg class="a" style="left:414px;top:726px" width="13" height="13" viewBox="0 0 13 13"><rect x="0" y="0" width="13" height="13" fill="#FFFFFF"/><path d="M0.5 12.5 V0.5 H12.5" fill="none" stroke="#A0A0A0" stroke-width="1"/><path d="M1.5 11.5 V1.5 H11.5" fill="none" stroke="#696969" stroke-width="1"/><path d="M1 12.5 H12.5 V1" fill="none" stroke="#E3E3E3" stroke-width="1"/></svg>
<svg class="a" style="left:489px;top:726px" width="13" height="13" viewBox="0 0 13 13"><rect x="0" y="0" width="13" height="13" fill="#FFFFFF"/><path d="M0.5 12.5 V0.5 H12.5" fill="none" stroke="#A0A0A0" stroke-width="1"/><path d="M1.5 11.5 V1.5 H11.5" fill="none" stroke="#696969" stroke-width="1"/><path d="M1 12.5 H12.5 V1" fill="none" stroke="#E3E3E3" stroke-width="1"/></svg>
<svg class="a" style="left:564px;top:726px" width="13" height="13" viewBox="0 0 13 13"><rect x="0" y="0" width="13" height="13" fill="#FFFFFF"/><path d="M0.5 12.5 V0.5 H12.5" fill="none" stroke="#A0A0A0" stroke-width="1"/><path d="M1.5 11.5 V1.5 H11.5" fill="none" stroke="#696969" stroke-width="1"/><path d="M1 12.5 H12.5 V1" fill="none" stroke="#E3E3E3" stroke-width="1"/></svg>
<svg class="a" style="left:639px;top:726px" width="13" height="13" viewBox="0 0 13 13"><rect x="0" y="0" width="13" height="13" fill="#FFFFFF"/><path d="M0.5 12.5 V0.5 H12.5" fill="none" stroke="#A0A0A0" stroke-width="1"/><path d="M1.5 11.5 V1.5 H11.5" fill="none" stroke="#696969" stroke-width="1"/><path d="M1 12.5 H12.5 V1" fill="none" stroke="#E3E3E3" stroke-width="1"/></svg>
<div class="a" style="left:691px;top:720px;width:134px;height:26px;background:#DFE1E2;"></div>
<div class="t" style="top:725px;letter-spacing:-0.6px;right:650px;text-align:right;">($388.50)</div>
<div class="t" style="top:725px;right:1331px;text-align:right;">Rate plan</div>
<div class="a" style="left:151px;top:720px;width:134px;height:26px;background:#FFFFFF;"></div>
<div class="a" style="left:263px;top:727px;width:13px;height:13px;background:#F0F0F0;"></div>
<svg class="a" style="left:263px;top:727px" width="13" height="13" viewBox="0 0 13 13"><path d="M3 5 H10 L6.5 9 Z" fill="#000"/></svg>
<svg class="a" style="left:129px;top:755px" width="13" height="13" viewBox="0 0 13 13"><rect x="0" y="0" width="13" height="13" fill="#FFFFFF"/><path d="M0.5 12.5 V0.5 H12.5" fill="none" stroke="#A0A0A0" stroke-width="1"/><path d="M1.5 11.5 V1.5 H11.5" fill="none" stroke="#696969" stroke-width="1"/><path d="M1 12.5 H12.5 V1" fill="none" stroke="#E3E3E3" stroke-width="1"/></svg>
<div class="t" style="top:753px;left:152px;">Don't calculate commission</div>
<div class="a" style="left:684px;top:763px;width:149px;height:1px;background:#C3D3D8;"></div>
<div class="t" style="top:783px;right:792px;text-align:right;">Total</div>
<div class="a" style="left:691px;top:778px;width:134px;height:26px;background:#DFE1E2;"></div>
<div class="t" style="top:783px;letter-spacing:-0.6px;right:650px;text-align:right;">($1,434.46)</div>
<div class="a" style="left:2px;top:920px;width:1468px;height:28px;background:#A6BFD6;"></div>
<div class="a" style="left:1275px;top:920px;width:181px;height:1px;background:#86A9C4;"></div>
<div class="a" style="left:2px;top:948px;width:1468px;height:31px;background:#4E4A4A;"></div>
<div class="a" style="left:2px;top:950px;width:126px;height:28px;background:#3E3C3C;"></div>
<div class="t" style="top:955px;color:#FFFFFF;left:10px;">Browsing</div>
<div class="t" style="top:955px;color:#FFFFFF;left:144px;">Transaction</div>
<div class="t" style="top:955px;color:#FFFFFF;left:411px;">E</div>
<div class="a" style="left:437px;top:952px;width:15px;height:23px;background:#C8961E;"></div>
<div class="t" style="top:955px;color:#FFFFFF;left:437px;width:15px;text-align:center;">S</div>
<div class="t" style="top:955px;color:#FFFFFF;left:470px;">T</div>
<div class="t" style="top:955px;color:#FFFFFF;left:503px;">I</div>
<div class="t" style="top:955px;color:#FFFFFF;left:560px;"><u>O</u>K command button.</div>
</body></html>
